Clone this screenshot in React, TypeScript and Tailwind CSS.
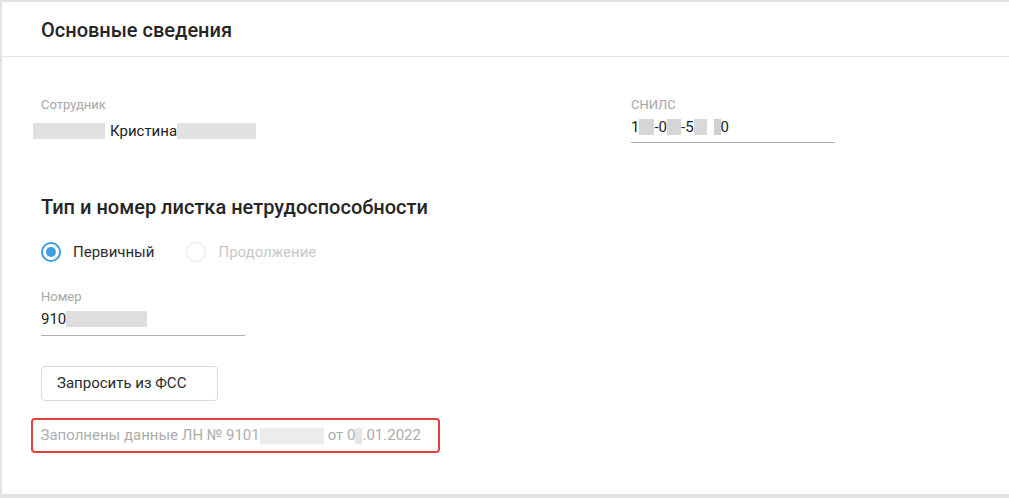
import React from 'react'

function Blur({ w, tone = 'bg-[#dcdcdc]' }: { w: number; tone?: string }) {
    return <span className={`inline-block h-[16px] align-[-3px] ${tone}`} style={{ width: w }} />
}

function Field({ label, children, width, pb = 'pb-[7px]' }: { label: string; children: React.ReactNode; width: string; pb?: string }) {
    return (
        <div className={`flex flex-col ${width}`}>
            <span className="text-[13px] leading-[15px] text-[#a6a6a6]">{label}</span>
            <div className={`mt-[6px] text-[15px] leading-[18px] text-[#222] border-b border-[#b0b0b0] flex items-center ${pb}`}>{children}</div>
        </div>
    )
}

export default function App() {
    return (
        <div className="w-[1009px] h-[498px] bg-[#e3e3e3] pt-[2px] pl-[2px] pb-[4px] font-['Roboto',sans-serif]">
            <div className="h-full bg-white flex flex-col">
                <div className="h-[55px] flex items-center pl-[39px] border-b border-[#e6e6e6]">
                    <h1 className="text-[20px] font-medium text-[#262626] leading-none pt-[2px]">Основные сведения</h1>
                </div>

                <div className="pl-[39px] pt-[40px] flex flex-col">
                    <div className="flex">
                        <div className="w-[590px] flex flex-col">
                            <span className="text-[13px] leading-[15px] text-[#a6a6a6]">Сотрудник</span>
                            <div className="mt-[10px] text-[15px] leading-[18px] text-[#222] -ml-[8px] flex items-center">
                                <Blur w={72} tone="bg-[#e0e0e0]" />
                                <span className="ml-[5px]">Кристина</span>
                                <Blur w={79} tone="bg-[#e2e2e2]" />
                            </div>
                        </div>
                        <Field label="СНИЛС" width="w-[204px]" pb="pb-[6px]">
                            <span>1</span><Blur w={15} tone="bg-[#d6d6d6]" /><span>-0</span><Blur w={14} tone="bg-[#d6d6d6]" />
                            <span>-5</span><Blur w={13} tone="bg-[#d9d9d9]" /><span className="w-[7px]"></span><Blur w={7} tone="bg-[#d0d0d0]" /><span>0</span>
                        </Field>
                    </div>

                    <h2 className="mt-[52px] text-[20px] font-medium text-[#262626] leading-[24px]">Тип и номер листка нетрудоспособности</h2>

                    <div className="mt-[23px] flex items-center text-[15px] leading-[18px]">
                        <span className="w-[20px] h-[20px] rounded-full border-[2.5px] border-[#3d9fe2] flex items-center justify-center">
                            <span className="w-[10px] h-[10px] rounded-full bg-[#3d9fe2]" />
                        </span>
                        <span className="ml-[12px] text-[#2b2b2b]">Первичный</span>
                        <span className="ml-[32px] w-[20px] h-[20px] rounded-full border border-[#e8e8e8]" />
                        <span className="ml-[12px] text-[#c8c8c8]">Продолжение</span>
                    </div>

                    <div className="mt-[27px]">
                        <Field label="Номер" width="w-[204px]">
                            <span>910</span><Blur w={81} tone="bg-[#dedede]" />
                        </Field>
                    </div>

                    <button className="mt-[30px] w-[177px] h-[35px] border border-[#d9d9d9] rounded-[4px] text-[15px] text-[#2b2b2b] bg-white text-left pl-[15px]">
                        Запросить из ФСС
                    </button>

                    <div className="mt-[17px] -ml-[10px] w-[409px] h-[35px] border-[2.5px] border-[#e0413a] rounded-[4px] flex items-center pl-[7.5px] text-[15px] text-[#adadad]">
                        <span>Заполнены данные ЛН № 9101</span>
                        <Blur w={64} tone="bg-[#ececec]" />
                        <span className="ml-[4px]">от 0</span>
                        <Blur w={7} tone="bg-[#e6e6e6]" />
                        <span>.01.2022</span>
                    </div>
                </div>
            </div>
        </div>
    )
}
